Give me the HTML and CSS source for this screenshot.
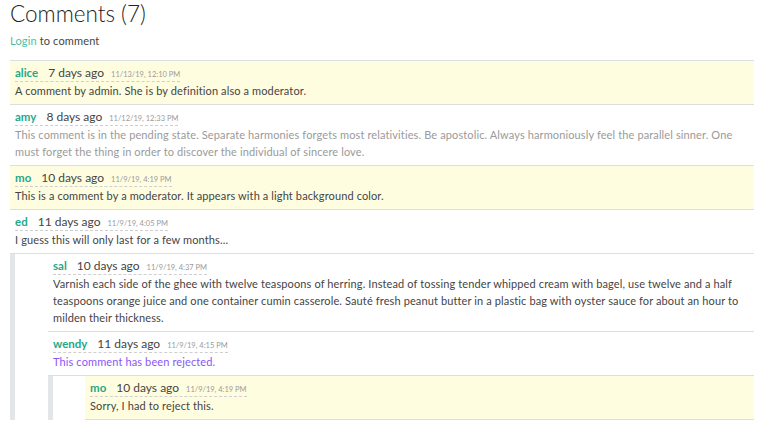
FILE: index.html
```html
<!DOCTYPE html>
<html>
<head>
<meta charset="utf-8">
<link rel="stylesheet" href="styles.css">
</head>
<body>
<div class="comments">
  <h1 class="title">Comments (7)</h1>
  <p class="login"><a class="login-link">Login</a> to comment</p>
  <div class="thread">
    <div class="comment mod">
      <div class="body">
        <div class="meta"><span class="author">alice</span><span class="ago">7 days ago</span><span class="date">11/13/19, 12:10 PM</span></div>
        <div class="text">A comment by admin. She is by definition also a moderator.</div>
      </div>
    </div>
    <div class="comment pending">
      <div class="body">
        <div class="meta"><span class="author">amy</span><span class="ago">8 days ago</span><span class="date">11/12/19, 12:33 PM</span></div>
        <div class="text">This comment is in the pending state. Separate harmonies forgets most relativities. Be apostolic. Always harmoniously feel the parallel sinner. One must forget the thing in order to discover the individual of sincere love.</div>
      </div>
    </div>
    <div class="comment mod">
      <div class="body">
        <div class="meta"><span class="author">mo</span><span class="ago">10 days ago</span><span class="date">11/9/19, 4:19 PM</span></div>
        <div class="text">This is a comment by a moderator. It appears with a light background color.</div>
      </div>
    </div>
    <div class="comment">
      <div class="body">
        <div class="meta"><span class="author">ed</span><span class="ago">11 days ago</span><span class="date">11/9/19, 4:05 PM</span></div>
        <div class="text">I guess this will only last for a few months...</div>
      </div>
      <div class="replies">
        <div class="comment">
          <div class="body">
            <div class="meta"><span class="author">sal</span><span class="ago">10 days ago</span><span class="date">11/9/19, 4:37 PM</span></div>
            <div class="text">Varnish each side of the ghee with twelve teaspoons of herring. Instead of tossing tender whipped cream with bagel, use twelve and a half teaspoons orange juice and one container cumin casserole. Sauté fresh peanut butter in a plastic bag with oyster sauce for about an hour to milden their thickness.</div>
          </div>
        </div>
        <div class="comment rejected">
          <div class="body">
            <div class="meta"><span class="author">wendy</span><span class="ago">11 days ago</span><span class="date">11/9/19, 4:15 PM</span></div>
            <div class="text">This comment has been rejected.</div>
          </div>
          <div class="replies nested">
            <div class="comment mod">
              <div class="body">
                <div class="meta"><span class="author">mo</span><span class="ago">10 days ago</span><span class="date">11/9/19, 4:19 PM</span></div>
                <div class="text">Sorry, I had to reject this.</div>
              </div>
            </div>
          </div>
        </div>
      </div>
    </div>
  </div>
</div>
</body>
</html>
```

FILE: styles.css
```css
html, body {
  margin: 0;
  padding: 0;
  background: #ffffff;
}
body {
  font-family: Lato, "Open Sans", sans-serif;
  color: #444;
}
.comments {
  width: 744px;
  margin-left: 10px;
  padding-top: 1px;
}
.title {
  margin: 0;
  font-size: 22.5px;
  line-height: 26px;
  font-weight: 300;
  color: #222;
}
.login {
  margin: 6px 0 0;
  font-size: 11px;
  line-height: 16px;
  letter-spacing: 0.15px;
  color: #444;
  height: 27px;
}
.login-link {
  color: #4bbfa5;
}
.thread {
  border-top: 1px solid #dcdfe1;
}
.body {
  padding: 4px 5px 5px;
  border-bottom: 1px solid #dcdfe1;
  font-size: 11px;
  line-height: 17px;
}
.mod > .body {
  background: #fffde0;
}
.meta {
  display: flex;
  align-items: baseline;
  width: fit-content;
  height: 16px;
  line-height: 16px;
  border-bottom: 1px dashed #cfcfcf;
  white-space: nowrap;
}
.author {
  font-size: 11.5px;
  font-weight: 700;
  color: #1fa888;
  margin-right: 10px;
}
.ago {
  font-size: 12px;
  color: #444;
  margin-right: 7px;
}
.date {
  font-size: 7.5px;
  color: #9a9a9a;
}
.text {
  font-size: 11px;
  line-height: 17px;
  letter-spacing: 0.12px;
  color: #444;
}
.pending .text {
  color: #9a9a9a;
}
.rejected > .body .text {
  color: #8a55f7;
}
.replies {
  border-left: 5px solid #e3e6e8;
  padding-left: 33px;
}
.replies.nested {
  padding-left: 32px;
}
```
